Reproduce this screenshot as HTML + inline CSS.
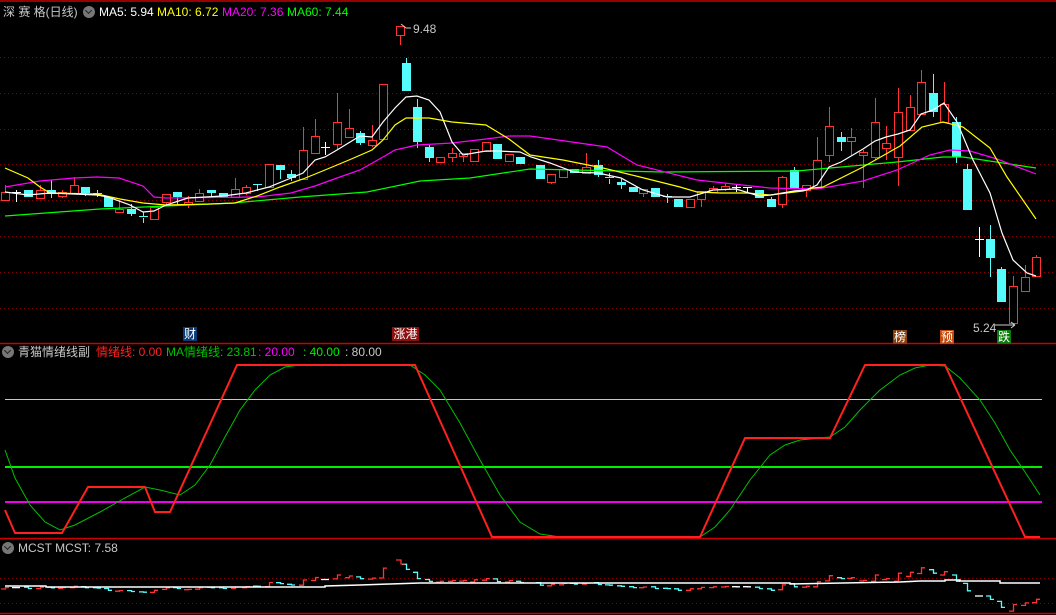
<!DOCTYPE html>
<html><head><meta charset="utf-8">
<style>
html,body{margin:0;padding:0;background:#000;}
body{width:1056px;height:615px;overflow:hidden;position:relative;font-family:"Liberation Sans","Noto Sans CJK SC",sans-serif;}
.t{position:absolute;font-size:12px;line-height:14px;white-space:nowrap;}
.ic{position:absolute;width:12px;height:12px;border-radius:50%;background:#777;}
.ic:after{content:"";position:absolute;left:3px;top:2px;width:4px;height:4px;border-right:1.5px solid #222;border-bottom:1.5px solid #222;transform:rotate(45deg);}
.tag{position:absolute;font-size:12px;line-height:14px;width:14px;height:14px;text-align:center;color:#fff;}
</style></head><body>
<svg id="s" width="1056" height="615" style="position:absolute;left:0;top:0" xmlns="http://www.w3.org/2000/svg">
<g stroke="#8a0000" stroke-dasharray="1,3" stroke-width="1">
<line x1="0" y1="57.5" x2="1056" y2="57.5"/><line x1="0" y1="93.5" x2="1056" y2="93.5"/>
<line x1="0" y1="129.5" x2="1056" y2="129.5"/><line x1="0" y1="164.5" x2="1056" y2="164.5"/>
<line x1="0" y1="200.5" x2="1056" y2="200.5"/><line x1="0" y1="236.5" x2="1056" y2="236.5"/>
<line x1="0" y1="272.5" x2="1056" y2="272.5"/><line x1="0" y1="308.5" x2="1056" y2="308.5"/>
<line x1="0" y1="578.5" x2="1056" y2="578.5"/><line x1="0" y1="603.5" x2="1056" y2="603.5"/>
</g>
<g stroke="#cc0000" stroke-width="1.5">
<line x1="0" y1="1" x2="1056" y2="1"/><line x1="0" y1="343.5" x2="1056" y2="343.5"/>
<line x1="0" y1="538.5" x2="1056" y2="538.5"/><line x1="0" y1="613.5" x2="1056" y2="613.5"/>
</g>
<line x1="5" y1="399.5" x2="1042" y2="399.5" stroke="#c8c8c8" stroke-width="1"/>
<line x1="5" y1="467" x2="1042" y2="467" stroke="#00ee00" stroke-width="2"/>
<line x1="5" y1="502" x2="1042" y2="502" stroke="#ee00ee" stroke-width="2"/>
<g id="cd"></g>
<g fill="none" stroke-width="1.2">
<polyline stroke="#00ff00" points="5,216 100,209 233,203 300,197 367,192 420,181 470,178 530,169 663,172 797,171 830,168 897,162 943,157 963,157 1036,168"/>
<polyline stroke="#ff00ff" points="5,187 40,181 74,178 97,177 119,178 143,186 154,197 166,198 257,197 291,193 315,186 337,178 360,170 383,157 395,150 417,145 452,143 486,139 509,136 530,136 607,147 637,165 697,180 770,188 817,189 863,181 897,170 930,155 950,150 970,151 997,159 1036,174"/>
<polyline stroke="#ffff00" points="5,168 28,178 40,187 50,193 97,194 120,199 143,203 166,205 211,204 235,203 257,196 280,187 303,179 325,170 349,160 372,150 383,140 395,125 406,118 429,118 452,122 486,125 509,139 530,155 563,160 603,168 640,177 680,187 697,192 720,193 747,193 770,195 803,191 813,188 823,187 863,167 900,146 922,127 943,122 963,127 990,148 1007,177 1036,219"/>
<polyline stroke="#ffffff" points="5,192 28,195 50,193 97,195 108,197 130,205 143,212 154,211 166,205 188,198 223,196 246,193 269,187 291,178 303,173 315,160 325,157 337,150 360,136 372,137 383,122 395,108 406,97 417,96 429,100 440,112 452,142 463,155 474,153 486,151 497,151 520,152 531,157 550,163 574,172 598,173 621,178 643,190 667,197 690,197 713,190 736,189 759,196 771,195 794,191 806,190 817,185 829,167 841,162 863,149 875,141 886,137 898,134 910,130 921,114 933,110 944,103 957,122 973,160 990,193 1002,233 1013,260 1027,273 1036,276"/>
<polyline stroke="#00c000" stroke-width="1" points="5,450 15,478 30,505 45,522 60,530 75,525 100,512 125,498 145,487 160,490 180,495 195,485 210,465 225,437 240,410 255,390 270,375 285,367 300,365 410,365 425,375 440,390 460,423 480,460 500,495 520,522 540,534 560,537 700,537 715,527 730,510 750,480 770,455 785,445 800,440 830,437 845,427 860,410 880,390 900,375 915,368 930,365 945,366 960,378 980,400 995,423 1010,450 1025,472 1040,495"/>
<polyline stroke="#ff2020" stroke-width="2" points="5,510 15,533 62,533 88,487 145,487 155,512 170,512 237,365 415,365 492,537 700,537 745,438 830,438 865,365 945,365 1025,537 1040,537"/>
<polyline stroke="#ffffff" stroke-width="1.5" points="5,586 46,586 46,587 325,587 325,586 360,585 390,584 420,583 650,583 790,583 790,584 900,582 920,581 945,581 945,580 960,580 960,581 1000,581 1000,583 1040,583"/>
</g>
<rect x="396.5" y="26.5" width="8" height="9" fill="none" stroke="#ff3333"/>
<line x1="400.5" y1="36" x2="400.5" y2="45" stroke="#ff3333"/>
<polyline points="401,24 406,28 411,28" fill="none" stroke="#ccc"/>
<line x1="995" y1="325" x2="1015" y2="325" stroke="#ccc"/>
<line x1="1011" y1="322" x2="1015" y2="325" stroke="#ccc"/>
<line x1="1011" y1="328" x2="1015" y2="325" stroke="#ccc"/>
</svg>
<div class="t" style="left:3px;top:5px;color:#c8c8c8">深 赛 格(日线)</div>
<div class="ic" style="left:83px;top:6px"></div>
<div class="t" style="left:99px;top:5px;color:#fff">MA5: 5.94</div>
<div class="t" style="left:157px;top:5px;color:#ffff00">MA10: 6.72</div>
<div class="t" style="left:222px;top:5px;color:#ff00ff">MA20: 7.36</div>
<div class="t" style="left:287px;top:5px;color:#00ff00">MA60: 7.44</div>
<div class="t" style="left:413px;top:22px;color:#c8c8c8">9.48</div>
<div class="tag" style="left:183px;top:327px;background:#0a3a78">财</div>
<div class="tag" style="left:392px;top:327px;width:27px;background:#8b1010">涨港</div>
<div class="tag" style="left:893px;top:330px;background:#8b4010">榜</div>
<div class="tag" style="left:940px;top:330px;background:#c04a10">预</div>
<div class="tag" style="left:997px;top:330px;background:#0a7a0a">跌</div>
<div class="t" style="left:973px;top:321px;color:#c8c8c8">5.24</div>
<div class="ic" style="left:2px;top:346px"></div>
<div class="t" style="left:18px;top:345px;color:#c8c8c8">青猫情绪线副</div>
<div class="t" style="left:96px;top:345px;color:#ff2020">情绪线: 0.00</div>
<div class="t" style="left:166px;top:345px;color:#00c000">MA情绪线: 23.81</div>
<div class="t" style="left:258px;top:345px;color:#ff00ff">: 20.00</div>
<div class="t" style="left:303px;top:345px;color:#00ee00">: 40.00</div>
<div class="t" style="left:345px;top:345px;color:#c8c8c8">: 80.00</div>
<div class="ic" style="left:2px;top:542px"></div>
<div class="t" style="left:18px;top:541px;color:#c8c8c8">MCST MCST: 7.58</div>
<script>
var C=[[5,192,200,185,200,'r'],[16,192,192,190,202,'w'],[28,190,197,190,197,'c'],[40,190,198,185,198,'r'],[51,190,194,180,198,'c'],[62,192,196,190,198,'r'],[74,185,193,177,193,'r'],[85,187,193,187,196,'c'],[97,193,195,190,197,'c'],[108,197,207,197,207,'c'],[119,209,212,200,213,'r'],[131,209,214,204,216,'c'],[143,216,218,212,223,'c'],[154,207,219,207,219,'r'],[166,194,202,194,205,'r'],[177,192,197,192,205,'c'],[188,202,204,196,208,'r'],[199,193,201,189,201,'r'],[211,190,193,190,197,'c'],[223,193,197,193,197,'c'],[235,189,197,178,197,'r'],[246,187,193,185,195,'r'],[257,184,185,184,191,'c'],[269,164,187,164,187,'r'],[280,165,170,165,179,'c'],[291,174,178,170,181,'c'],[303,150,179,127,179,'r'],[315,136,153,119,153,'r'],[325,147,147,142,155,'w'],[337,122,144,93,150,'r'],[349,128,137,109,137,'r'],[360,133,143,131,145,'c'],[372,140,145,125,147,'r'],[383,84,139,84,139,'r'],[406,63,91,58,91,'c'],[417,107,142,99,148,'c'],[429,147,158,145,162,'c'],[440,157,162,157,162,'r'],[452,153,157,148,162,'r'],[463,153,156,153,162,'r'],[474,149,161,149,161,'r'],[486,142,151,142,151,'r'],[497,144,159,144,159,'c'],[509,154,161,154,161,'r'],[520,157,164,157,164,'c'],
[540,165,179,165,179,'c'],[551,174,182,174,184,'r'],[563,169,177,169,177,'r'],[574,169,173,169,173,'c'],[586,167,173,153,173,'r'],[598,165,175,160,177,'c'],[609,177,179,173,184,'c'],[621,182,185,179,189,'c'],[633,187,192,187,192,'c'],[643,189,193,189,197,'r'],[655,188,197,188,197,'c'],[667,196,198,194,203,'c'],[678,199,207,199,207,'c'],[690,199,207,199,207,'r'],[701,191,199,191,207,'r'],[713,188,192,186,192,'r'],[725,186,189,183,191,'r'],[736,187,188,184,192,'w'],[747,187,188,187,192,'w'],[759,190,198,190,198,'c'],[771,199,207,197,207,'c'],[782,177,204,176,208,'r'],[794,170,188,167,188,'c'],[806,185,190,185,197,'r'],[817,160,188,137,188,'r'],[829,126,155,107,162,'r'],[841,137,142,132,151,'c'],[851,137,141,128,155,'r'],[863,152,155,150,188,'r'],[875,122,157,98,160,'r'],[886,143,148,126,160,'r'],[898,112,157,88,186,'r'],[910,107,130,95,130,'r'],[921,82,114,70,114,'r'],[933,93,112,74,117,'c'],[944,104,122,82,122,'r'],[956,122,157,117,163,'c'],[967,169,210,164,210,'c'],[979,239,239,227,257,'w'],[990,239,258,225,277,'c'],[1001,269,302,267,302,'c'],[1013,286,323,276,326,'r'],[1025,277,291,265,291,'r'],[1036,257,276,255,276,'r']];
var g=document.getElementById('cd'),h='',m='';
function my(y){return (553+y*0.18).toFixed(1);}
C.forEach(function(c){var x=c[0]+0.5,t=c[1],b=c[2],hi=c[3],lo=c[4],k=c[5];
var col=k=='r'?'#ff3333':(k=='c'?'#54fcfc':'#ffffff');
if(hi<t)h+='<line x1="'+x+'" y1="'+hi+'" x2="'+x+'" y2="'+t+'" stroke="'+col+'"/>';
if(lo>b)h+='<line x1="'+x+'" y1="'+b+'" x2="'+x+'" y2="'+lo+'" stroke="'+col+'"/>';
if(k=='r')h+='<rect x="'+(c[0]-3.5)+'" y="'+(t+0.5)+'" width="8" height="'+Math.max(1,b-t)+'" fill="#000" stroke="'+col+'"/>';
else if(k=='c'&&b-t>2)h+='<rect x="'+(c[0]-4)+'" y="'+t+'" width="9" height="'+(b-t)+'" fill="'+col+'"/>';
else h+='<line x1="'+(c[0]-4)+'" y1="'+(t+0.5)+'" x2="'+(c[0]+5)+'" y2="'+(t+0.5)+'" stroke="'+col+'"/>';
var o=k=='r'?b:t,cl=k=='r'?t:b;
m+='<polyline fill="none" stroke="'+col+'" stroke-width="1.3" points="'+(c[0]-4)+','+my(o)+' '+x+','+my(o)+' '+x+','+my(cl)+' '+(c[0]+4)+','+my(cl)+'"/>';
});
m+='<polyline fill="none" stroke="#ff3333" stroke-width="1.3" points="396,560 401,560 401,564 405,564"/>';
g.innerHTML=h+m;
</script>
</body></html>
